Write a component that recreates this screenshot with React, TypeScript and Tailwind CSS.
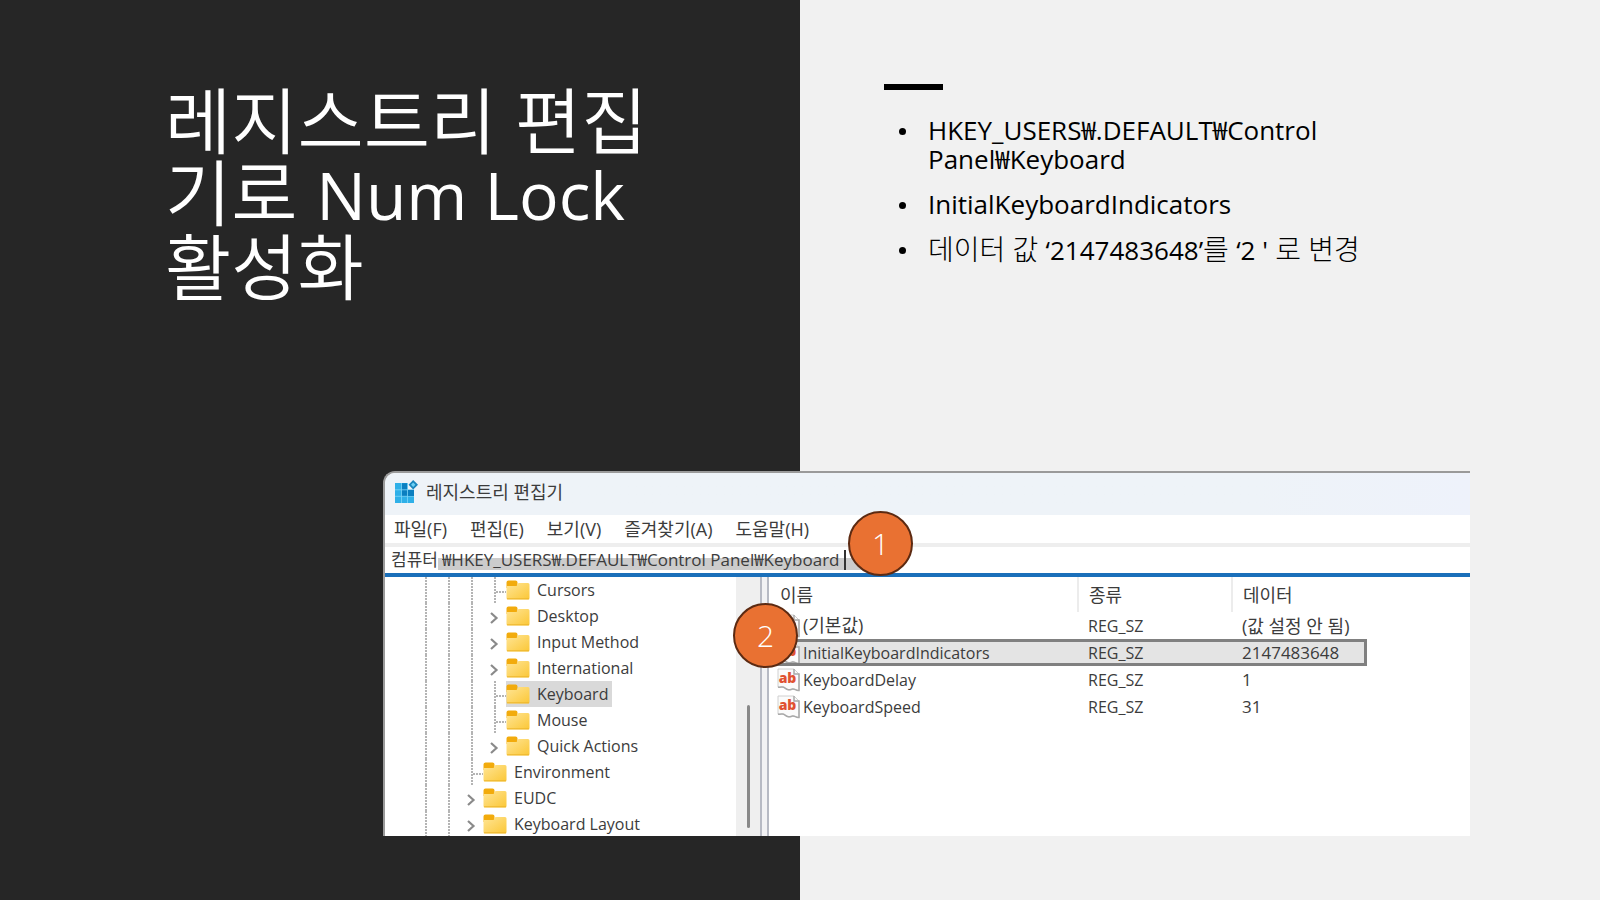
import type { ReactNode } from "react";

const latin = "font-['Open_Sans','Noto_Sans_CJK_KR',sans-serif]";

function RegeditIcon() {
  return (
    <svg viewBox="0 0 24 24" className="size-6 shrink-0" aria-hidden="true">
      <rect x="1" y="3" width="19" height="20" rx="1" fill="#1398d8" />
      <path d="M1 3h6v20H1z M1 16.500h19V23H1z" fill="#2fb0e8" />
      <path d="M8 3.500h5.500V10H20v6H8z" fill="#0b7fc0" />
      <path d="M1 9.800h19M1 16.300h19M7.500 3v20M13.500 3v20" stroke="#7fd6f7" strokeWidth="0.800" />
      <path d="M14 2.500h6.500v7H14z" fill="#eef3f8" />
      <path d="M14 10h6v6h-6z" fill="#0b7fc0" />
      <path d="M19.200 0L24 4.700 19.200 9.400 14.500 4.700z" fill="#1a86bd" />
      <path d="M19.200 2.500l2.200 2.200-2.200 2.200L17 4.700z" fill="#6ed0f5" />
    </svg>
  );
}

function FolderIcon() {
  return (
    <svg viewBox="0 0 24 20" className="h-5 w-6 shrink-0" aria-hidden="true">
      <defs>
        <linearGradient id="folder" x1="0" y1="0" x2="1" y2="1">
          <stop offset="0" stopColor="#ffe596" />
          <stop offset="1" stopColor="#fbc736" />
        </linearGradient>
      </defs>
      <path d="M.5 2.500a2 2 0 0 1 2-2h7a2 2 0 0 1 2 2V8H.5z" fill="#f2ab0c" />
      <path d="M.5 6h10l2-3H22a1.500 1.500 0 0 1 1.500 1.500V18a1.500 1.500 0 0 1-1.500 1.500H2A1.500 1.500 0 0 1 .5 18z" fill="url(#folder)" />
      <path d="M1 18.800h22" stroke="#edb52c" />
    </svg>
  );
}

function StringValueIcon() {
  return (
    <svg viewBox="0 0 24 24" className="size-6 shrink-0" aria-hidden="true">
      <path d="M1 1h16l5 5v16.500c-3 .5-4-2-6.500-1.500-2 .5-3 1.500-5 .5-2.500-1-3-2.500-5-2.500-1.500 0-2.500.5-4.500 0z" fill="#fbfbfb" stroke="#d0d0d0" />
      <path d="M17 1v5h5v16.500c-3 .5-4-2-6.500-1.500-2 .5-3 1.500-5 .5-2.500-1-3-2.500-5-2.500-1.500 0-2.500.5-4.500 0" fill="none" stroke="#a9a9a9" strokeWidth="1.500" />
      <text x="10.500" y="14.500" textAnchor="middle" fontSize="14" fontWeight="800" fill="#e05232">
        ab
      </text>
    </svg>
  );
}

function Chevron() {
  return (
    <svg viewBox="0 0 10 14" className="h-3.5 w-2.5" fill="none" stroke="#8a8a8a" strokeWidth="2.200" aria-hidden="true">
      <path d="M2 2l5.500 5L2 12" />
    </svg>
  );
}

type Cell = "line" | "elbow" | "chevron";

function Guide({ kind, name }: { kind: Cell; name: string }) {
  if (kind === "chevron") {
    return (
      <button type="button" aria-label={`${name} 펼치기`} className="flex h-[26px] w-[23px] shrink-0 items-center pt-1 pl-1.5">
        <Chevron />
      </button>
    );
  }
  return (
    <svg viewBox="0 0 23 26" className="h-[26px] w-[23px] shrink-0" fill="none" stroke="#b4b4b4" strokeWidth="2" strokeDasharray="2 1" aria-hidden="true">
      <path d="M12 0V26" />
      {kind === "elbow" && <path d="M13 15H23" />}
    </svg>
  );
}

const tree: { name: string; guides: Cell[]; selected?: boolean }[] = [
  { name: "Cursors", guides: ["line", "line", "line", "elbow"] },
  { name: "Desktop", guides: ["line", "line", "line", "chevron"] },
  { name: "Input Method", guides: ["line", "line", "line", "chevron"] },
  { name: "International", guides: ["line", "line", "line", "chevron"] },
  { name: "Keyboard", guides: ["line", "line", "line", "elbow"], selected: true },
  { name: "Mouse", guides: ["line", "line", "line", "elbow"] },
  { name: "Quick Actions", guides: ["line", "line", "line", "chevron"] },
  { name: "Environment", guides: ["line", "line", "elbow"] },
  { name: "EUDC", guides: ["line", "line", "chevron"] },
  { name: "Keyboard Layout", guides: ["line", "line", "chevron"] },
];

const values = [
  { name: "(기본값)", type: "REG_SZ", data: "(값 설정 안 됨)", korean: true },
  { name: "InitialKeyboardIndicators", type: "REG_SZ", data: "2147483648", selected: true },
  { name: "KeyboardDelay", type: "REG_SZ", data: "1" },
  { name: "KeyboardSpeed", type: "REG_SZ", data: "31" },
];

const menus = ["파일(F)", "편집(E)", "보기(V)", "즐겨찾기(A)", "도움말(H)"];

function Bullet({ children }: { children: ReactNode }) {
  return (
    <li className="flex gap-[22px]">
      <span className="mt-3 size-[7px] shrink-0 rounded-full bg-black" />
      <span>{children}</span>
    </li>
  );
}

function RegistryWindow() {
  return (
    <section className="relative z-10 col-span-2 col-start-1 row-start-2 mr-[130px] mb-16 ml-[383px] min-w-0 text-[16px] text-[#3c3c3c]">
      <div className="flex flex-col overflow-hidden rounded-tl-xl border-t-2 border-l-2 border-[#9a9a9a] bg-white">
        <header className="flex h-[42px] items-center gap-2 bg-linear-to-r from-[#eef3f8] from-80% to-[#eef2fb] pb-1 pl-[9px]">
          <RegeditIcon />
          <h2 className="text-[18px]">레지스트리 편집기</h2>
        </header>
        <nav className="flex h-7 items-center gap-[23px] pl-[9px] text-[18px]">
          {menus.map((m) => (
            <button key={m} type="button">
              {m}
            </button>
          ))}
        </nav>
        <form className="flex h-[30px] items-center border-t-4 border-[#eeeeee] pl-[6px]">
          <label htmlFor="address" className="shrink-0 text-[17px]">
            컴퓨터
          </label>
          <span className="flex items-center bg-linear-to-b from-white from-40% to-[#cccccc] to-40% pr-4">
            <input
              id="address"
              type="text"
              readOnly
              value="₩HKEY_USERS₩.DEFAULT₩Control Panel₩Keyboard"
              className="h-5 w-[406px] pl-1 text-[17px] outline-none"
            />
            <span className="h-5 w-[2px] bg-[#333333]" />
          </span>
        </form>
        <div className="flex h-[263px] border-t-4 border-[#1a6fba]">
          <ul className="w-[351px] shrink-0 overflow-hidden pl-[29px]">
            {tree.map((t) => (
              <li key={t.name} className="flex h-[26px] items-center">
                {t.guides.map((g, i) => (
                  <Guide key={i} kind={g} name={t.name} />
                ))}
                <span className={t.selected ? "flex h-[26px] items-center gap-[7px] bg-[#d9d9d9] pr-1" : "flex h-[26px] items-center gap-[7px]"}>
                  <FolderIcon />
                  {t.name}
                </span>
              </li>
            ))}
          </ul>
          <div className="flex w-6 shrink-0 flex-col items-center justify-end bg-[#efefef] pb-2">
            <div className="h-[123px] w-[3px] rounded-full bg-[#888888]" />
          </div>
          <div className="w-[9px] shrink-0 border-x-2 border-[#b7bac4] bg-[#f2f2f4]" />
          <div className="min-w-0 grow">
            <table className="w-[598px] table-fixed text-left">
              <thead>
                <tr className="h-[35px] text-[18px] leading-6">
                  <th className="w-[309px] border-r-2 border-[#ececec] pl-[11px] font-normal">이름</th>
                  <th className="w-[154px] border-r-2 border-[#ececec] pl-[10px] font-normal">종류</th>
                  <th className="pl-[10px] font-normal">데이터</th>
                </tr>
              </thead>
              <tbody>
                {values.map((v) => (
                  <tr key={v.name} className={v.selected ? "h-[27px] bg-[#e4e4e4] outline-3 -outline-offset-3 outline-[#808080]" : "h-[27px]"}>
                    <td className="pl-2">
                      <span className={v.korean ? "flex h-[27px] items-center gap-[2px] text-[18px]" : "flex h-[27px] items-center gap-[2px]"}>
                        <StringValueIcon />
                        {v.name}
                      </span>
                    </td>
                    <td className="pl-[10px] leading-6">{v.type}</td>
                    <td className={v.korean ? "pl-[10px] text-[18px] leading-6 whitespace-nowrap" : "pl-[10px] text-[17px] leading-6 whitespace-nowrap"}>{v.data}</td>
                  </tr>
                ))}
              </tbody>
            </table>
          </div>
        </div>
      </div>
      <span className="absolute top-[40px] left-[465px] flex size-[65px] items-center justify-center rounded-full border-2 border-[#5c2a12] bg-[#e97132] text-[30px] font-light text-white">
        1
      </span>
      <span className="absolute top-[132px] left-[350px] flex size-[65px] items-center justify-center rounded-full border-2 border-[#5c2a12] bg-[#e97132] text-[30px] font-light text-white">
        2
      </span>
    </section>
  );
}

export default function App() {
  return (
    <main className={`grid min-h-screen grid-cols-2 grid-rows-[minmax(471px,1fr)_auto] ${latin}`}>
      <section className="col-start-1 row-span-2 row-start-1 bg-[#262626] px-[165px] pt-[84px]">
        <h1 className="w-[500px] text-[72px] leading-[72px] font-[350] text-white">
          레지스트리 편집
          <br />
          기로 <span className="text-[66px] font-normal">Num Lock</span>
          <br />
          활성화
        </h1>
      </section>
      <section className="col-start-2 row-span-2 row-start-1 bg-[#f1f1f1] pt-[84px] pl-[84px]">
        <div className="h-[6px] w-[59px] bg-black" />
        <ul className="mt-[26px] flex flex-col gap-4 pl-[15px] text-[26px] leading-[29px] text-black">
          <Bullet>
            HKEY_USERS₩.DEFAULT₩Control
            <br />
            Panel₩Keyboard
          </Bullet>
          <Bullet>InitialKeyboardIndicators</Bullet>
          <Bullet>
            <span className="text-[28px] font-light">
              데이터 값 <span className="text-[26px] font-normal">‘2147483648’</span>를 <span className="text-[26px] font-normal">‘2 '</span> 로 변경
            </span>
          </Bullet>
        </ul>
      </section>
      <RegistryWindow />
    </main>
  );
}
